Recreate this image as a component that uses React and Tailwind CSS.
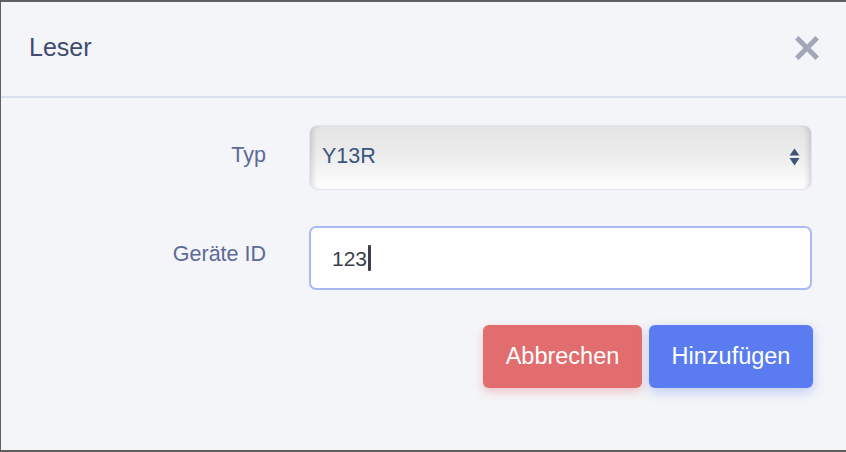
export default function App() {
  const font = { fontFamily: '"Liberation Sans", Arial, sans-serif' };
  return (
    <div
      className="w-[846px] h-[452px] bg-[#f4f5f8] border-t-2 border-l border-b-2 border-[#5f5f5f] flex flex-col"
      style={font}
    >
      <div className="h-[96px] shrink-0 border-b-2 border-[#dae0ec] flex items-center justify-between pl-[28px] pr-[27px]">
        <h1 className="text-[25px] text-[#3f4b6f] leading-none -mt-[3px]">Leser</h1>
        <button className="w-[24px] h-[24px] flex items-center justify-center -mt-[3px]" aria-label="close">
          <svg width="24" height="24" viewBox="0 0 24 24">
            <path d="M3.5 3.5 L20.5 20.5 M20.5 3.5 L3.5 20.5" stroke="#a2a6b9" strokeWidth="5" strokeLinecap="square" fill="none" />
          </svg>
        </button>
      </div>

      <div className="pt-[27px] grid grid-cols-[265px_503px] gap-x-[43px] gap-y-[36px] items-center">
        <label className="text-right text-[21.5px] text-[#5d6a96] leading-none -mt-[4px]">Typ</label>
        <div className="relative h-[65px] rounded-[8px] border border-[#e3e5ee] bg-[linear-gradient(to_bottom,#e4e4e5_0%,#ececec_45%,#ffffff_100%)] shadow-[inset_7px_0_6px_-5px_rgba(0,0,0,0.16),inset_-7px_0_6px_-5px_rgba(0,0,0,0.16)] flex items-center pl-[12px]">
          <span className="text-[21.5px] text-[#3a5580] leading-none -mt-[1px]">Y13R</span>
          <svg className="absolute right-[11px] top-[21px]" width="11" height="21" viewBox="0 0 11 21">
            <path d="M5.5 1.5 L10.5 8.5 L0.5 8.5 Z" fill="#3d5478" />
            <path d="M0.5 11 L10.5 11 L5.5 18.5 Z" fill="#3d5478" />
          </svg>
        </div>

        <label className="text-right text-[21.5px] text-[#5d6a96] leading-none -mt-[6px]">Geräte ID</label>
        <div className="h-[64px] rounded-[7px] border-2 border-[#aab9f3] bg-white flex items-center pl-[21px]">
          <span className="text-[21px] text-[#3a3f4a] leading-none">123</span>
          <span className="inline-block w-[3px] h-[26px] bg-[#3a3f4a] rounded-[1px] ml-[1px]" />
        </div>
      </div>

      <div className="flex justify-end gap-[7px] pr-[33px] pt-[35px]">
        <button className="w-[159px] h-[63px] rounded-[6px] bg-[#e16d6f] text-white text-[23.5px] shadow-[0_4px_10px_rgba(225,109,111,0.35)]">
          Abbrechen
        </button>
        <button className="w-[164px] h-[63px] rounded-[6px] bg-[#5b7cf0] text-white text-[23.5px] shadow-[0_4px_12px_rgba(91,124,240,0.35)]">
          Hinzufügen
        </button>
      </div>
    </div>
  );
}
